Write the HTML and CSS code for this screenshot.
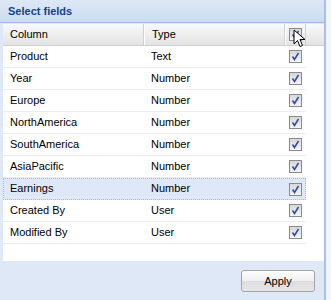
FILE: index.html
```html
<!DOCTYPE html>
<html lang="en">
<head>
    <meta charset="UTF-8">
    <title>Select fields</title>
    <link rel="stylesheet" href="styles.css">
</head>
<body>
    <div class="window">
        <div class="panel">
            <!-- title -->
            <div class="panel-header">Select fields</div>

            <!-- field grid -->
            <div class="panel-body">
                <div class="grid">
                    <div class="grid-head">
                        <div class="cell">Column</div>
                        <div class="cell">Type</div>
                        <div class="cell check"><span class="cb"></span></div>
                    </div>
                    <div class="grid-row"><div class="cell">Product</div><div class="cell">Text</div><div class="cell check"><span class="cb"></span></div></div>
                    <div class="grid-row"><div class="cell">Year</div><div class="cell">Number</div><div class="cell check"><span class="cb"></span></div></div>
                    <div class="grid-row"><div class="cell">Europe</div><div class="cell">Number</div><div class="cell check"><span class="cb"></span></div></div>
                    <div class="grid-row"><div class="cell">NorthAmerica</div><div class="cell">Number</div><div class="cell check"><span class="cb"></span></div></div>
                    <div class="grid-row"><div class="cell">SouthAmerica</div><div class="cell">Number</div><div class="cell check"><span class="cb"></span></div></div>
                    <div class="grid-row"><div class="cell">AsiaPacific</div><div class="cell">Number</div><div class="cell check"><span class="cb"></span></div></div>
                    <div class="grid-row selected"><div class="cell">Earnings</div><div class="cell">Number</div><div class="cell check"><span class="cb"></span></div></div>
                    <div class="grid-row"><div class="cell">Created By</div><div class="cell">User</div><div class="cell check"><span class="cb"></span></div></div>
                    <div class="grid-row"><div class="cell">Modified By</div><div class="cell">User</div><div class="cell check"><span class="cb"></span></div></div>
                </div>
            </div>

            <!-- buttons -->
            <div class="panel-footer">
                <button class="btn">Apply</button>
            </div>
        </div>
        <div class="edge"></div>
    </div>

    <!-- mouse pointer -->
    <svg class="cursor" width="14" height="20" viewBox="0 0 14 20">
        <path d="M1 1 L1 15 L4.5 11.5 L7 17.5 L9.5 16.5 L7 10.5 L12 10.5 Z" fill="#fff" stroke="#000" stroke-width="1" stroke-linejoin="miter"/>
    </svg>
</body>
</html>
```

FILE: styles.css
```css
body {
    margin: 0;
    padding: 0;
    width: 331px;
    height: 300px;
    overflow: hidden;
    font-family: "Liberation Sans", Arial, sans-serif;
    font-size: 11px;
    color: #000;
    background: #dfe8f6;
    position: relative;
}

.window {
    display: flex;
    height: 300px;
}

.panel {
    width: 324px;
    display: flex;
    flex-direction: column;
    border-right: 2px solid #a6c0e6;
}

.edge {
    flex: 1;
    background: #f2f6fb;
}

.panel-header {
    height: 23px;
    line-height: 23px;
    padding-left: 8px;
    font-weight: bold;
    font-size: 11px;
    color: #15428b;
    background: linear-gradient(#dde8f6, #cbdcf2);
    border-bottom: 1px solid #99bbe8;
    box-sizing: border-box;
    margin-bottom: 1px;
}

.panel-body {
    padding-left: 3px;
}

.grid {
    background: #fff;
    height: 237px;
}

.grid-head,
.grid-row {
    display: grid;
    grid-template-columns: 141px 141px 21px;
    height: 22px;
    box-sizing: border-box;
}

.grid-head {
    background: linear-gradient(#f9f9f9, #e3e3e3);
    border-bottom: 1px solid #d0d0d0;
    width: 100%;
    grid-template-columns: 141px 141px 21px 1fr;
}

.grid-head .cell {
    border-right: 1px solid #d0d0d0;
    border-left: 1px solid #fff;
}

.grid-head .cell:first-child {
    border-left: none;
}

.grid-row {
    width: 303px;
    border-bottom: 1px solid #ededed;
}

.grid-row.selected {
    background: #dfe8f6;
    border: 1px dotted #a3bae9;
    grid-template-columns: 140px 141px 20px;
}

.cell {
    padding-left: 7px;
    line-height: 21px;
    white-space: nowrap;
    overflow: hidden;
}

.grid-row.selected .cell {
    line-height: 19px;
}

.grid-row.selected .cell:first-child {
    padding-left: 6px;
}

.cell.check {
    padding-left: 0;
    display: flex;
    align-items: center;
    justify-content: center;
}

.cb {
    width: 11px;
    height: 11px;
    border: 1px solid #8a8a8a;
    background:
        url("data:image/svg+xml,%3Csvg xmlns='http://www.w3.org/2000/svg' width='11' height='11'%3E%3Cpath d='M2.5 5.5 L4.5 8.5 L8.5 2' fill='none' stroke='%23334fa3' stroke-width='1.6'/%3E%3C/svg%3E") no-repeat,
        linear-gradient(#d8d8d8, #f4f4f4);
}

.panel-footer {
    flex: 1;
    display: flex;
    justify-content: flex-end;
    align-items: flex-start;
    padding: 9px 9px 0 0;
}

.btn {
    width: 74px;
    height: 22px;
    font-family: "Liberation Sans", Arial, sans-serif;
    font-size: 11px;
    color: #000;
    border: 1px solid #a4a4a4;
    border-radius: 3px;
    background: linear-gradient(#fdfdfd 0%, #f0f0f0 50%, #dedede 51%, #e6e6e6 100%);
    padding: 0;
    cursor: pointer;
}

.cursor {
    position: absolute;
    left: 293px;
    top: 29px;
}
```
